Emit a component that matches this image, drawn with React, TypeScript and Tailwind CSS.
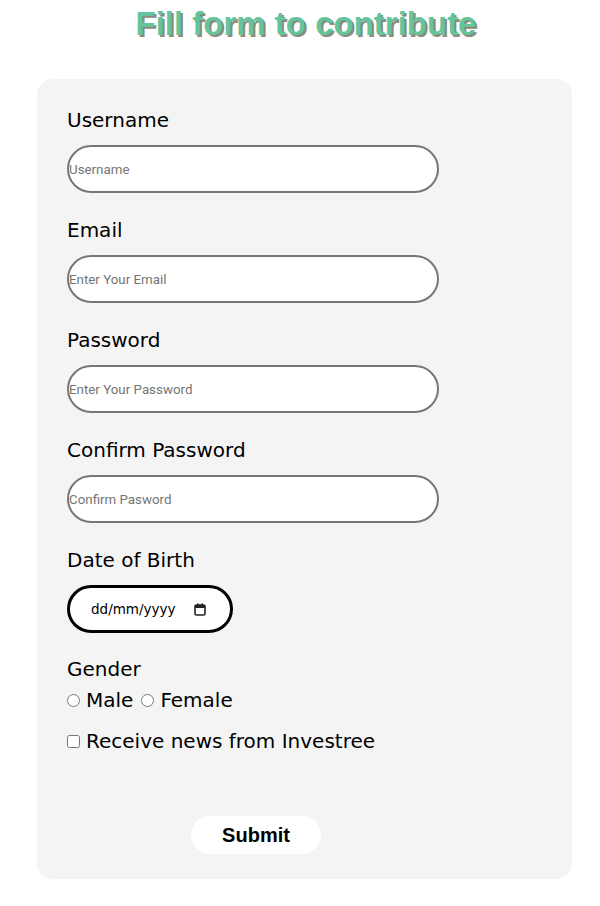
import { FC, ReactNode } from 'react';

const labelFont = { fontFamily: '"DejaVu Sans", sans-serif' };

const Field: FC<{ label: string; placeholder: string; type?: string }> = ({
  label,
  placeholder,
  type = 'text',
}) => (
  <div className="mb-[20px]">
    <label
      className="block h-[30px] pt-[2px] text-[20px] leading-[30px] text-black"
      style={labelFont}
    >
      {label}
    </label>
    <input
      type={type}
      placeholder={placeholder}
      className="mt-[12px] block h-[48px] w-[372px] rounded-full border-2 border-[#767676] bg-white px-0 text-[13.33px] font-['Roboto',sans-serif] text-black outline-none placeholder:text-[#757575]"
    />
  </div>
);

const Option: FC<{ children: ReactNode }> = ({ children }) => (
  <span className="text-[20px] leading-[24px] text-black" style={labelFont}>
    {children}
  </span>
);

export default function App() {
  return (
    <div className="min-h-[906px] bg-white pb-[27px]">
      <h1 className="pt-[4px] pl-[12px] text-center text-[33px] font-bold leading-[40px] text-[#64c49c] font-['Liberation_Sans',Arial,sans-serif] [text-shadow:2px_2px_0_#8d8a7c]">
        Fill form to contribute
      </h1>

      <div className="ml-[37px] mt-[35px] w-[535px] rounded-[16px] bg-[#f4f4f4] px-[30px] pt-[24px] pb-[25px]">
        <Field label="Username" placeholder="Username" />
        <Field label="Email" placeholder="Enter Your Email" type="email" />
        <Field label="Password" placeholder="Enter Your Password" type="password" />
        <Field label="Confirm Password" placeholder="Confirm Pasword" type="password" />

        <div className="mb-[19px]">
          <label
            className="block h-[30px] pt-[2px] text-[20px] leading-[30px] text-black"
            style={labelFont}
          >
            Date of Birth
          </label>
          <div className="mt-[12px] flex h-[48px] w-[166px] items-center rounded-full border-[3px] border-black bg-white pl-[21px] pr-[24px]">
            <span className="text-[13.5px] text-black" style={labelFont}>
              dd/mm/yyyy
            </span>
            <svg className="ml-auto" width="12" height="13" viewBox="0 0 12 13" fill="none">
              <rect x="1" y="2" width="10" height="10" rx="1.5" stroke="#222" strokeWidth="1.6" />
              <rect x="1" y="2" width="10" height="3" fill="#222" />
              <rect x="3" y="0.5" width="1.6" height="2.5" fill="#222" />
              <rect x="7.4" y="0.5" width="1.6" height="2.5" fill="#222" />
            </svg>
          </div>
        </div>

        <label
          className="block h-[30px] pt-[2px] text-[20px] leading-[30px] text-black"
          style={labelFont}
        >
          Gender
        </label>
        <div className="mt-[6px] flex h-[24px] items-center">
          <input type="radio" name="gender" className="m-0 h-[13px] w-[13px]" />
          <span className="ml-[6px]">
            <Option>Male</Option>
          </span>
          <input type="radio" name="gender" className="ml-[8px] h-[13px] w-[13px]" />
          <span className="ml-[6px]">
            <Option>Female</Option>
          </span>
        </div>
        <div className="mt-[17px] flex h-[24px] items-center">
          <input type="checkbox" className="m-0 h-[13px] w-[13px]" />
          <span className="ml-[6px]">
            <Option>Receive news from Investree</Option>
          </span>
        </div>

        <button
          type="submit"
          className="ml-[124px] mt-[63px] block h-[38px] w-[130px] rounded-full bg-white text-[20px] font-bold text-black font-['Liberation_Sans',Arial,sans-serif]"
        >
          Submit
        </button>
      </div>
    </div>
  );
}
